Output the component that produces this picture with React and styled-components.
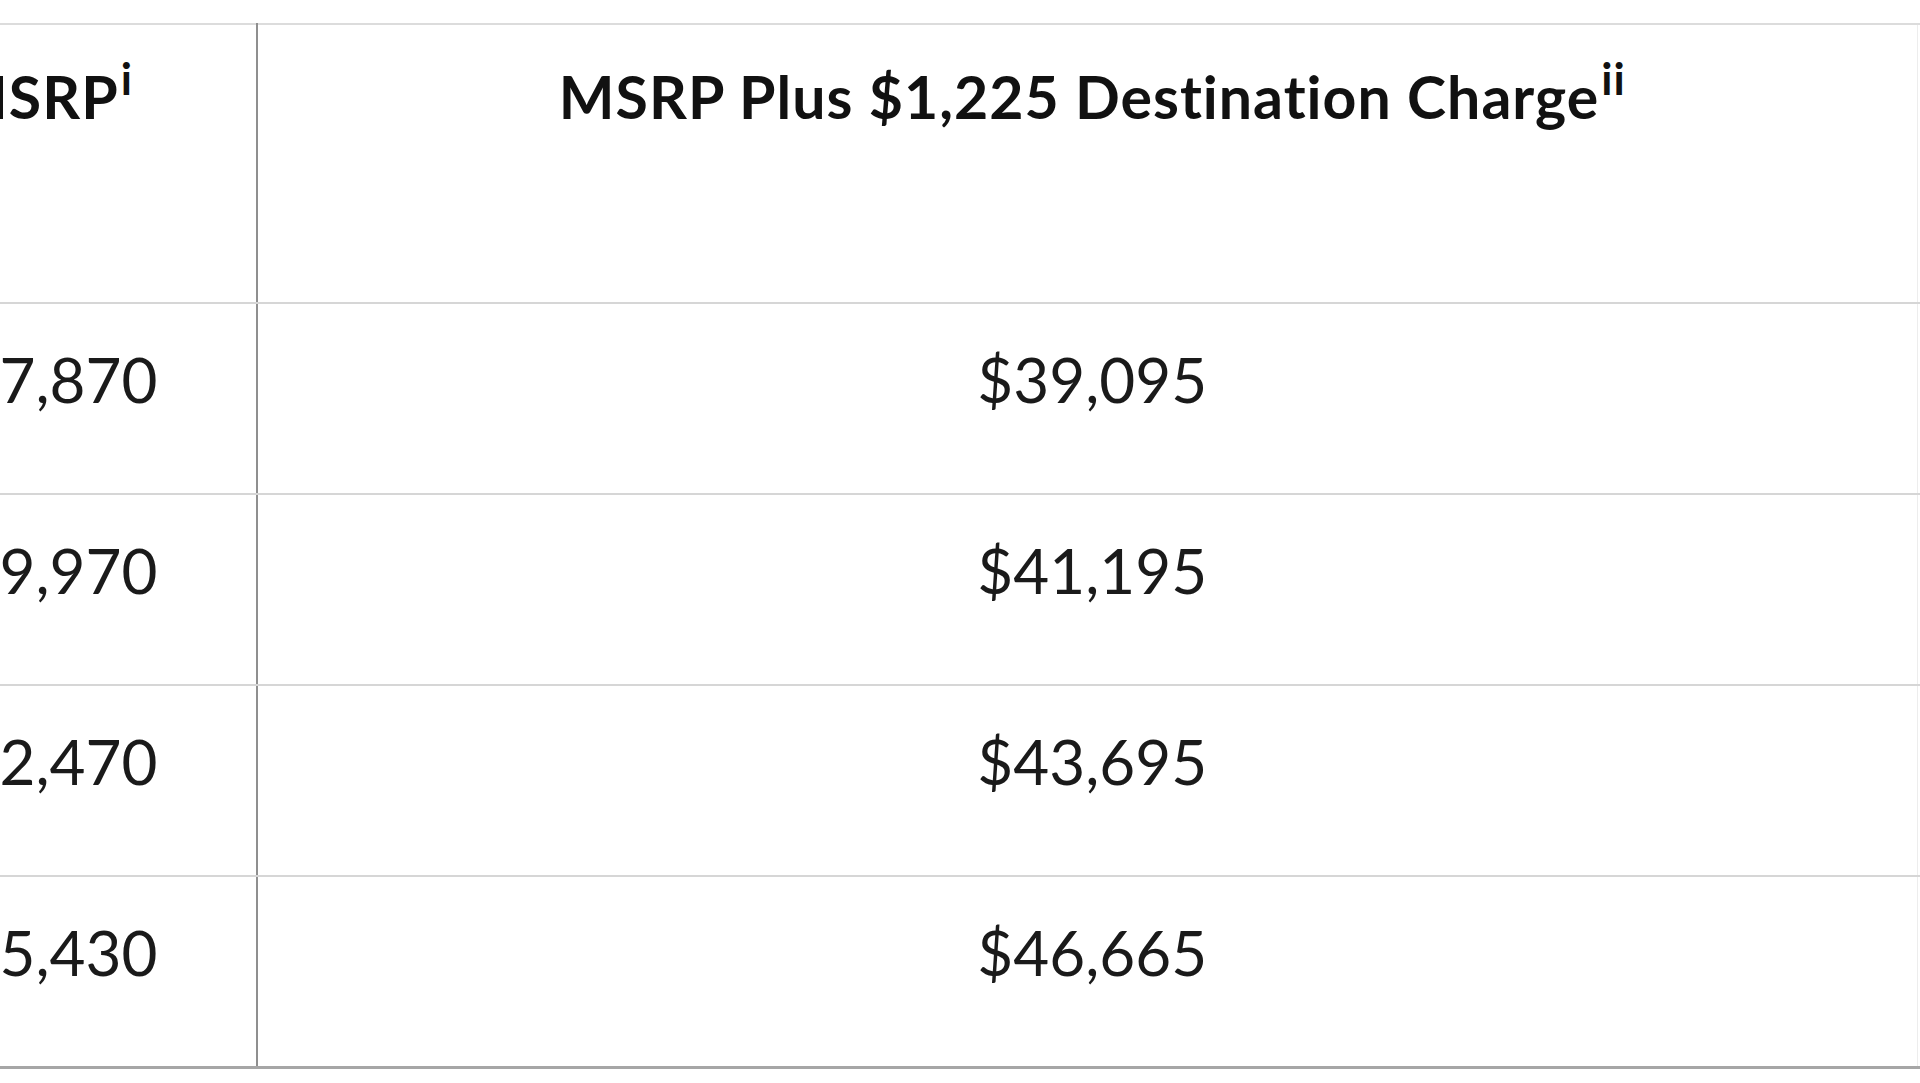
import React from "react";
import styled, { createGlobalStyle } from "styled-components";

const GlobalStyle = createGlobalStyle`
    html, body {
        margin: 0;
        padding: 0;
        background: #ffffff;
        overflow: hidden;
    }
    body {
        font-family: Lato, "Open Sans", sans-serif;
        color: #1a1a1a;
    }
`;

const rows = [
    { msrp: "$37,870", total: "$39,095" },
    { msrp: "$39,970", total: "$41,195" },
    { msrp: "$42,470", total: "$43,695" },
    { msrp: "$45,430", total: "$46,665" },
];

const App = () => {
    return (
        <>
            <GlobalStyle />
            <Page>
                <PriceTable>
                    <colgroup>
                        <col style={{ width: "428px" }} />
                        <col style={{ width: "1660px" }} />
                        <col style={{ width: "300px" }} />
                    </colgroup>
                    <thead>
                        <tr>
                            <HeadCell $divider>
                                MSRP<sup>i</sup>
                            </HeadCell>
                            <HeadCell $shift>
                                MSRP Plus $1,225 Destination Charge<sup>ii</sup>
                            </HeadCell>
                            <HeadCell $last />
                        </tr>
                    </thead>
                    <tbody>
                        {rows.map((row, i) => (
                            <tr key={row.total}>
                                <ValueCell $divider $bottom={i === rows.length - 1}>
                                    {row.msrp}
                                </ValueCell>
                                <ValueCell $shift $bottom={i === rows.length - 1}>
                                    {row.total}
                                </ValueCell>
                                <ValueCell $last $bottom={i === rows.length - 1} />
                            </tr>
                        ))}
                    </tbody>
                </PriceTable>
            </Page>
        </>
    );
};

export default App;

const Page = styled.div`
    width: 1920px;
    height: 1083px;
    overflow: hidden;
    padding-top: 23px;
    box-sizing: border-box;
`;

const PriceTable = styled.table`
    border-collapse: collapse;
    table-layout: fixed;
    width: 2388px;
    margin-left: -171px;
    border-top: 2px solid #dcdcdc;
`;

const cellBorder = (props) =>
    props.$divider ? "2px solid #8f8f8f" : props.$last ? "none" : "1px solid #ededed";

const HeadCell = styled.th`
    height: 279px;
    box-sizing: border-box;
    vertical-align: top;
    text-align: center;
    padding: 37px 0 0 ${(props) => (props.$shift ? "10px" : "0")};
    font-family: Lato, "Open Sans", sans-serif;
    font-weight: 700;
    font-size: 59px;
    letter-spacing: 1px;
    font-variant-ligatures: none;
    line-height: 1.2;
    color: #111111;
    border-bottom: 2px solid #d6d6d6;
    border-right: ${cellBorder};

    sup {
        font-size: 0.75em;
        line-height: 0;
        vertical-align: 0.55em;
        margin-left: 2px;
    }
`;

const ValueCell = styled.td`
    height: 191px;
    box-sizing: border-box;
    vertical-align: top;
    text-align: center;
    padding: 38px 0 0 ${(props) => (props.$shift ? "10px" : "0")};
    font-family: Lato, "Open Sans", sans-serif;
    font-weight: 400;
    font-size: 62px;
    line-height: 1.2;
    color: #1a1a1a;
    border-bottom: ${(props) => (props.$bottom ? "3px solid #a6a6a6" : "2px solid #d6d6d6")};
    border-right: ${cellBorder};
`;
